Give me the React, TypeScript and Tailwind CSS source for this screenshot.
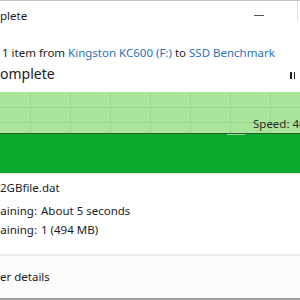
import React from "react";

const font = { fontFamily: '"Noto Sans", "Open Sans", sans-serif' };

// clipped prefix: the window is wider than the viewport, so text starts left of x=0
function Clip({ w, children }: { w: string; children: React.ReactNode }) {
  return <span className={`flex shrink-0 justify-end whitespace-nowrap ${w}`}>{children}</span>;
}

function SpeedGraph() {
  const cols = [30, 70, 110, 150, 190, 230, 270];
  return (
    <div className="relative h-[82px] w-full">
      <svg width="300" height="82" className="block">
        <rect x="0" y="0" width="300" height="41" fill="#abe59c" />
        {cols.map((x) => (
          <line key={x} x1={x + 0.5} y1="0" x2={x + 0.5} y2="41" stroke="#9bd68c" strokeWidth="1" />
        ))}
        <line x1="0" y1="15.5" x2="300" y2="15.5" stroke="#9bd68c" strokeWidth="1" />
        <line x1="0" y1="30.5" x2="300" y2="30.5" stroke="#9bd68c" strokeWidth="1" />
        <rect x="0" y="41" width="300" height="1" fill="#2f5a2c" />
        <rect x="0" y="42" width="300" height="39" fill="#0caa2c" />
        <rect x="227" y="42" width="18" height="1" fill="#8fdc99" />
        <rect x="0" y="81" width="300" height="1" fill="#e3e3e3" />
      </svg>
      <div className="absolute left-[253px] top-[24px] whitespace-nowrap text-[11.5px] leading-[16px] text-[#2b2b2b]">
        Speed: 463 MB/s
      </div>
    </div>
  );
}

export default function App() {
  return (
    <div
      className="flex h-[300px] w-[300px] flex-col overflow-hidden border-t border-[#c6c6c6] bg-white text-[#1b1b1b]"
      style={font}
    >
      {/* title bar */}
      <div className="relative flex h-[29px] shrink-0 items-center">
        <div className="flex text-[11.5px] leading-[16px]">
          <Clip w="w-0">100% com</Clip>
          <span className="whitespace-nowrap">plete</span>
        </div>
        <span className="ml-auto mr-[36px] mt-[-1px] h-px w-[10px] bg-[#555]" />
        <span className="absolute right-[2px] top-0 h-[19px] w-px bg-[#dcdcdc]" />
      </div>

      {/* copying line */}
      <div className="mt-[15px] flex text-[11.5px] leading-[16px]">
        <Clip w="w-[2px]">Copying&nbsp;</Clip>
        <span className="whitespace-nowrap">
          1 item from <span className="text-[#2a72b8]">Kingston KC600 (F:)</span> to{" "}
          <span className="text-[#2a72b8]">SSD Benchmark</span>
        </span>
      </div>

      {/* heading */}
      <div className="mt-[2px] flex h-[22px] items-center text-[14px] leading-[22px]">
        <Clip w="w-0">100% c</Clip>
        <span className="whitespace-nowrap">omplete</span>
        <span className="ml-auto mr-[5px] mt-[2px] flex gap-[2px]">
          <span className="h-[7px] w-[1.5px] bg-[#222]" />
          <span className="h-[7px] w-[1.5px] bg-[#222]" />
        </span>
      </div>

      <div className="mt-[7px]">
        <SpeedGraph />
      </div>

      {/* details */}
      <div className="mt-[6px] flex text-[11.5px] leading-[16px]">
        <Clip w="w-0">Name:&nbsp;</Clip>
        <span className="whitespace-nowrap">2GBfile.dat</span>
      </div>
      <div className="mt-[7px] grid grid-cols-[37px_1fr] gap-x-[4px] gap-y-[3px] text-[11.5px] leading-[16px]">
        <Clip w="w-[37px]">Time remaining:</Clip>
        <span className="whitespace-nowrap">About 5 seconds</span>
        <Clip w="w-[37px]">Items remaining:</Clip>
        <span className="whitespace-nowrap">1 (494 MB)</span>
      </div>

      <div className="mt-[16px] h-[2px] shrink-0 bg-[#ececec]" />

      {/* footer */}
      <div className="flex flex-1 flex-col bg-[#fcfcfc]">
        <div className="mt-[13px] flex text-[11.5px] leading-[16px]">
          <Clip w="w-0">Few</Clip>
          <span className="whitespace-nowrap">er details</span>
        </div>
        <div className="mt-auto h-[2px] bg-[#a0a0a0]" />
      </div>
    </div>
  );
}
